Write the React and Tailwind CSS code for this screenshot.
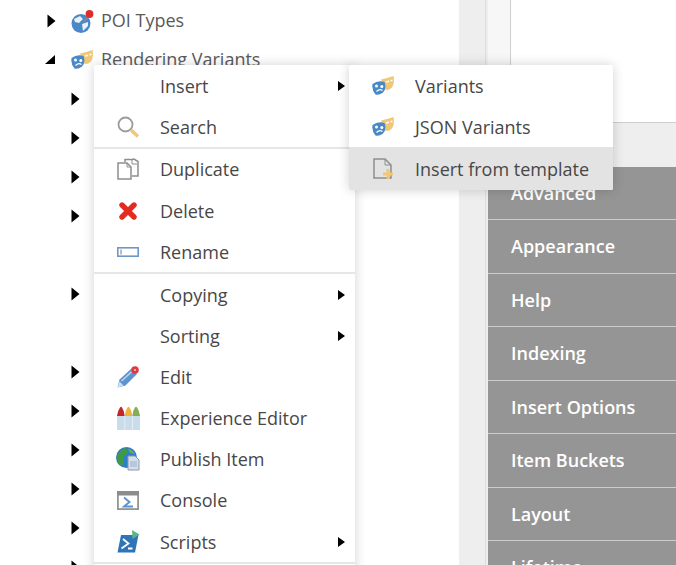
import React from "react";

const TreeArrow = () => (
  <svg width="9" height="14" viewBox="0 0 9 14" className="shrink-0">
    <path d="M0.5 0.5 L8.5 7 L0.5 13.5 Z" fill="#000" />
  </svg>
);

const SubArrow = () => (
  <svg width="7" height="10" viewBox="0 0 7 10" className="absolute left-[244px] top-[16px]">
    <path d="M0 0 L7 5 L0 10 Z" fill="#000" />
  </svg>
);

const Masks = () => (
  <svg width="22" height="19" viewBox="0 0 22 19">
    <path d="M9 3.5 Q15 2 21.5 0 Q23 7 20 11.5 Q17 15 13 13.5 Z" fill="#efc777" />
    <path d="M14 6 L17 5.2 M18.5 4.8 L20.5 4.2" stroke="#fff" strokeWidth="1.6" />
    <path d="M0.5 8 Q6 4 12.5 6 Q15 12 11 16.5 Q7 19.5 3.5 18.5 Q-0.5 14 0.5 8 Z" fill="#4a88c7" />
    <circle cx="4.5" cy="10" r="1.5" fill="#fff" />
    <circle cx="9.8" cy="10.5" r="1.5" fill="#fff" />
    <path d="M4.5 15.5 Q7.5 12.5 10.5 14.5" stroke="#fff" strokeWidth="1.2" fill="none" />
  </svg>
);

const Globe = () => (
  <svg width="24" height="24" viewBox="0 0 24 24">
    <circle cx="10" cy="14.5" r="9.5" fill="#4a88c7" />
    <path d="M3 10 L9 7 L12 10 L8 14 L4 13 Z M11 15 L17 13 L17 17 L12 22 Z" fill="#e8f0f8" />
    <path d="M13 13 L18 6" stroke="#8a8a8a" strokeWidth="1.4" />
    <circle cx="18.5" cy="5" r="3.9" fill="#e02b2b" />
  </svg>
);

const SearchIcon = () => (
  <svg width="24" height="24" viewBox="0 0 24 24">
    <circle cx="9.5" cy="9.5" r="7" fill="#fff" stroke="#9b9b9b" strokeWidth="1.8" />
    <path d="M15 15 L22 21.5" stroke="#efc777" strokeWidth="3.4" />
  </svg>
);

const DuplicateIcon = () => (
  <svg width="22" height="22" viewBox="0 0 22 22" fill="none" stroke="#8e8e8e" strokeWidth="1.5">
    <path d="M8 4 V1.5 H15 L17 1 L21 3.5 V18 H15" />
    <path d="M15 1.5 V6 H20" strokeWidth="1" />
    <path d="M1 5 H10 L14 9 V21 H1 Z" fill="#fff" />
    <path d="M10 5 V9 H14" strokeWidth="1" />
  </svg>
);

const DeleteIcon = () => (
  <svg width="18" height="18" viewBox="0 0 18 18">
    <path d="M3 3 L15 15 M15 3 L3 15" stroke="#e32b22" strokeWidth="5.4" strokeLinecap="round" />
  </svg>
);

const RenameIcon = () => (
  <svg width="22" height="10" viewBox="0 0 22 10">
    <rect x="0.8" y="0.8" width="20.4" height="8.4" fill="#fff" stroke="#6b9ac9" strokeWidth="1.6" />
    <rect x="3" y="2.5" width="2" height="5" fill="#bdbdbd" />
  </svg>
);

const EditIcon = () => (
  <svg width="22" height="22" viewBox="0 0 22 22">
    <path d="M0.5 21.5 L2.5 13.5 L14.5 2.5 L20 8 L8.5 19.5 Z" fill="#5d93cf" />
    <path d="M4.5 15 L15.5 5" stroke="#bcd4ec" strokeWidth="1.6" />
    <path d="M0.5 21.5 L2.5 15.5 L6.5 19.5 Z" fill="#cfdff0" />
    <circle cx="18" cy="4" r="3.8" fill="#df3a3f" />
    <circle cx="18" cy="4" r="1" fill="#f7c8c8" />
  </svg>
);

const CrayonsIcon = () => (
  <svg width="23" height="24" viewBox="0 0 23 24">
    <rect x="0" y="8" width="23" height="16" fill="#c9dcea" />
    <rect x="7.3" y="8" width="1" height="16" fill="#e3edf5" />
    <rect x="15" y="8" width="1" height="16" fill="#e3edf5" />
    <path d="M0 10 Q0.5 5 3 1.5 Q4 0 5 1.5 Q7.5 5 7.6 10 Z" fill="#c3272b" />
    <path d="M7.7 10 Q8 5 10.5 1.5 Q11.5 0 12.5 1.5 Q15 5 15.3 10 Z" fill="#efb23a" />
    <path d="M15.4 10 Q15.5 5 18 1.5 Q19 0 20 1.5 Q22.5 5 23 10 Z" fill="#86ad55" />
  </svg>
);

const PublishIcon = () => (
  <svg width="24" height="24" viewBox="0 0 24 24">
    <circle cx="10.5" cy="10.5" r="10.5" fill="#2f7fc8" />
    <path d="M0.5 12 Q1 5 8 1 Q14 2 11 7 Q7 8 7.5 12 Q8.5 18 5 18.5 Q1.5 16 0.5 12 Z" fill="#3f9a45" />
    <path d="M12 1.5 Q17 3 19 7 L14 6 Z" fill="#67ad58" />
    <path d="M12 9 H19 L23 13 V23 H12 Z" fill="#d5dfec" stroke="#8f9aa8" strokeWidth="1" />
    <rect x="14" y="14" width="7" height="6" fill="#b6c7de" />
  </svg>
);

const ConsoleIcon = () => (
  <svg width="22" height="19" viewBox="0 0 22 19">
    <rect x="0.9" y="0.9" width="20.2" height="17.2" fill="#fff" stroke="#949494" strokeWidth="1.8" />
    <rect x="0" y="0" width="22" height="4.5" fill="#8c8c8c" />
    <path d="M7 6.5 L12.5 11 L7 15.5 H16" fill="none" stroke="#5d93cf" strokeWidth="1.9" />
  </svg>
);

const ScriptsIcon = () => (
  <svg width="23" height="23" viewBox="0 0 23 23">
    <path d="M4 5 H21.5 L18 22.5 H0.5 Z" fill="#2f73b9" />
    <path d="M15 0 L22.5 4.5 L15.5 9 Z" fill="#5cb58a" />
    <path d="M6 9 L11.5 13.5 L4.5 18.5 M11 18.5 H15.5" fill="none" stroke="#fff" strokeWidth="1.8" />
  </svg>
);

const NewDocIcon = () => (
  <svg width="20" height="22" viewBox="0 0 20 22">
    <path d="M1 1 H12 L18 7 V20 H1 Z" fill="none" stroke="#8e8e8e" strokeWidth="1.5" />
    <path d="M12 1 V7 H18" fill="none" stroke="#8e8e8e" strokeWidth="1" />
    <path d="M15 11 V21 M10 16 H20" stroke="#efc777" strokeWidth="3" />
  </svg>
);

// child rows under Rendering Variants, false = no expander arrow
const treeRows = [true, true, true, true, false, true, false, true, true, true, true, true, true];

const panels = ["Advanced", "Appearance", "Help", "Indexing", "Insert Options", "Item Buckets", "Layout", "Lifetime"];

const MenuItem = ({ icon, label, sub, active }) => (
  <div className={`relative flex items-center ${active ? "h-[42.6px] bg-[#e3e3e3]" : "h-[41.2px]"}`}>
    <div className="flex w-[66px] shrink-0 justify-center pl-[2px] blur-[0.35px]">{icon}</div>
    <span className="text-[18px] leading-none text-[#474747]">{label}</span>
    {sub && <SubArrow />}
  </div>
);

const Separator = () => <div className="h-[1.5px] bg-[#e6e6e6]" />;

export default function App() {
  return (
    <div className="relative flex h-[565px] w-[676px] overflow-hidden bg-white font-['Open_Sans',sans-serif]">
      {/* content tree */}
      <div className="w-[459px] shrink-0 pt-px">
        <div className="flex h-[39px] items-center pl-[47px]">
          <TreeArrow />
          <div className="ml-[15px] w-[25px] blur-[0.35px]"><Globe /></div>
          <span className="ml-[5px] text-[18px] text-[#5a5a5a]">POI Types</span>
        </div>
        <div className="flex h-[39px] items-center pl-[45px]">
          <svg width="10" height="9" viewBox="0 0 10 9" className="shrink-0">
            <path d="M0 9 L10 0 V9 Z" fill="#000" />
          </svg>
          <div className="ml-[16px] w-[25px] blur-[0.35px]"><Masks /></div>
          <span className="ml-[5px] text-[18px] text-[#5a5a5a]">Rendering Variants</span>
        </div>
        {treeRows.map((on, i) => (
          <div key={i} className="flex h-[39px] items-center pl-[71px]">
            {on && <TreeArrow />}
          </div>
        ))}
      </div>

      {/* splitter */}
      <div className="flex h-full w-[29px] shrink-0 justify-end bg-[#eeeeee]">
        <div className="mr-[2px] w-px bg-[#dcdcdc]" />
      </div>

      {/* right pane */}
      <div className="flex min-w-0 flex-1 flex-col">
        <div className="flex h-[123px] shrink-0 border-b border-[#cfcfcf]">
          <div className="w-[23px] border-r border-[#cfcfcf] bg-[#f7f7f7]" />
          <div className="flex-1 bg-white" />
        </div>
        <div className="h-[43.5px] shrink-0 bg-[#eeeeee]" />
        <div className="flex-1 bg-[#959595]">
          {panels.map((p) => (
            <div key={p} className="flex h-[53.5px] items-center border-b border-[#cccccc] pl-[23px] pt-px">
              <span className="text-[18px] font-semibold text-white">{p}</span>
            </div>
          ))}
        </div>
      </div>

      {/* context menu */}
      <div className="absolute left-[94px] top-[65px] w-[261px] rounded-[2px] bg-white shadow-[0_0_12px_rgba(0,0,0,0.18)]">
        <MenuItem label="Insert" sub />
        <MenuItem icon={<SearchIcon />} label="Search" />
        <Separator />
        <MenuItem icon={<DuplicateIcon />} label="Duplicate" />
        <MenuItem icon={<DeleteIcon />} label="Delete" />
        <MenuItem icon={<RenameIcon />} label="Rename" />
        <Separator />
        <MenuItem label="Copying" sub />
        <MenuItem label="Sorting" sub />
        <MenuItem icon={<EditIcon />} label="Edit" />
        <MenuItem icon={<CrayonsIcon />} label="Experience Editor" />
        <MenuItem icon={<PublishIcon />} label="Publish Item" />
        <MenuItem icon={<ConsoleIcon />} label="Console" />
        <MenuItem icon={<ScriptsIcon />} label="Scripts" sub />
        <Separator />
        <div className="h-[20px]" />
      </div>

      {/* insert submenu */}
      <div className="absolute left-[349px] top-[65px] w-[264px] overflow-hidden rounded-[2px] bg-white shadow-[0_0_12px_rgba(0,0,0,0.18)]">
        <MenuItem icon={<Masks />} label="Variants" />
        <MenuItem icon={<Masks />} label="JSON Variants" />
        <MenuItem icon={<NewDocIcon />} label="Insert from template" active />
      </div>
    </div>
  );
}
